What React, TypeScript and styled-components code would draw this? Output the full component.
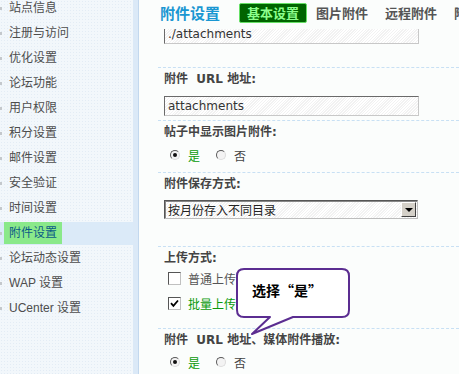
import React from 'react';
import styled, { createGlobalStyle } from 'styled-components';

const GlobalStyle = createGlobalStyle`
  html, body { margin: 0; padding: 0; overflow: hidden; background: #fbfdfc; }
  body { font-family: "Noto Sans CJK SC", sans-serif; font-size: 12px; }
`;

const Page = styled.div`
  display: flex;
  width: 459px;
  height: 374px;
  overflow: hidden;
`;

const Sidebar = styled.nav`
  width: 139px;
  flex: none;
  box-sizing: border-box;
  padding-right: 6px;
  background:
    linear-gradient(to right, transparent 133px, #dbe9f7 133px, #dbe9f7 138px, #c3d8ee 138px),
    radial-gradient(circle, #e3ecf5 0.7px, transparent 1px) 0 0 / 3px 3px,
    #f2f7fb;
`;

const NavList = styled.ul`
  list-style: none;
  margin: -4px 0 0;
  padding: 0;
`;

const NavItem = styled.li<{ $active?: boolean }>`
  position: relative;
  height: 25px;
  line-height: 25px;
  padding-left: 9px;
  font-family: "Liberation Sans", "Noto Sans CJK SC", sans-serif;
  font-size: 12px;
  color: ${p => (p.$active ? '#0a5c86' : '#4d4d4d')};
  white-space: nowrap;
  background: ${p =>
    p.$active
      ? 'linear-gradient(transparent 1px, #dbeaf8 1px, #dbeaf8 24px, transparent 24px)'
      : 'transparent'};
  &::before {
    content: '';
    position: absolute;
    left: 0;
    top: 11px;
    width: 2px;
    height: 3px;
    background: #c4c8cc;
  }
`;

const ActivePill = styled.span`
  display: inline-block;
  margin-left: -5px;
  padding: 0 5px;
  height: 22px;
  line-height: 22px;
  margin-top: 1px;
  vertical-align: top;
  background: #8ae98a;
`;

const Main = styled.main`
  position: relative;
  flex: 1;
  display: flex;
  flex-direction: column;
  min-width: 0;
  background: #fbfdfc;
`;

const Header = styled.header`
  position: relative;
  z-index: 1;
  height: 29px;
  flex: none;
  box-sizing: border-box;
  padding: 3px 0 0 21px;
  display: flex;
  align-items: flex-start;
  background: #fbfdfc;
  white-space: nowrap;
  overflow: hidden;
`;

const Title = styled.h1`
  margin: 0 19px 0 0;
  font-size: 15px;
  line-height: 20px;
  font-weight: bold;
  color: #1a97d2;
`;

const Tabs = styled.div`
  display: flex;
  gap: 1px;
`;

const Tab = styled.span<{ $active?: boolean }>`
  height: 20px;
  box-sizing: border-box;
  line-height: 18px;
  padding: 0 7px;
  font-size: 13px;
  font-weight: bold;
  border: 1px solid ${p => (p.$active ? '#66e066' : 'transparent')};
  border-radius: 2px;
  background: ${p => (p.$active ? '#006400' : 'transparent')};
  color: ${p => (p.$active ? '#8cff8c' : '#555')};
`;

const Content = styled.div`
  flex: 1;
  overflow: hidden;
  padding-left: 19px;
`;

const Section = styled.section<{ $first?: boolean; $pb: number }>`
  margin-top: ${p => (p.$first ? '-5px' : '0')};
  border-top: ${p => (p.$first ? 'none' : '1px dashed #c8e0f4')};
  padding: 0 0 ${p => p.$pb}px 6px;
`;

const Label = styled.div`
  height: 22px;
  line-height: 22px;
  font-family: "DejaVu Sans", "Noto Sans CJK SC", sans-serif;
  font-size: 12px;
  font-weight: bold;
  color: #444;
  white-space: nowrap;
`;

const TextInput = styled.input<{ $mt?: number }>`
  display: block;
  margin: ${p => p.$mt ?? 0}px 0 0;
  width: 255px;
  height: 20px;
  box-sizing: border-box;
  padding: 0 3px;
  font-family: "DejaVu Sans", sans-serif;
  font-size: 12px;
  color: #333;
  border: 1px solid;
  border-color: #6a6a6a #c8c8c8 #c8c8c8 #6a6a6a;
  background: repeating-linear-gradient(135deg, #ffffff 0 1px, #f2f2f2 1px 2px);
  outline: none;
`;

const RadioRow = styled.div<{ $mt?: number }>`
  display: flex;
  align-items: center;
  gap: 16px;
  height: 22px;
  margin-top: ${p => p.$mt ?? 0}px;
  padding-left: 6px;
`;

const Option = styled.label<{ $on?: boolean }>`
  display: flex;
  align-items: center;
  gap: 8px;
  font-size: 12px;
  color: ${p => (p.$on ? '#0a9a0a' : '#444')};
`;

const RadioDot = styled.span<{ $checked?: boolean }>`
  position: relative;
  width: 10px;
  height: 10px;
  box-sizing: border-box;
  border-radius: 50%;
  border: 1px solid;
  border-color: #5a5a5a #dcdcdc #dcdcdc #5a5a5a;
  background: #f3f3f3;
  &::after {
    content: '';
    display: ${p => (p.$checked ? 'block' : 'none')};
    position: absolute;
    left: 2px;
    top: 2px;
    width: 4px;
    height: 4px;
    border-radius: 50%;
    background: #111;
  }
`;

const SelectBox = styled.div`
  margin-top: 5px;
  width: 254px;
  height: 19px;
  box-sizing: border-box;
  display: flex;
  align-items: center;
  border: 1px solid;
  border-color: #555 #bdbdbd #bdbdbd #555;
  box-shadow: inset 1px 1px 0 #888;
  background: repeating-linear-gradient(135deg, #ffffff 0 1px, #f2f2f2 1px 2px);
`;

const SelectText = styled.span`
  flex: 1;
  padding-left: 3px;
  font-size: 12px;
  line-height: 17px;
  color: #222;
`;

const SelectButton = styled.span`
  width: 15px;
  height: 15px;
  margin-right: 1px;
  box-sizing: border-box;
  display: flex;
  align-items: center;
  justify-content: center;
  background: #d4d0c8;
  border: 1px solid;
  border-color: #ffffff #404040 #404040 #ffffff;
  &::after {
    content: '';
    border-left: 4px solid transparent;
    border-right: 4px solid transparent;
    border-top: 4px solid #000;
  }
`;

const CheckRow = styled.label<{ $on?: boolean; $mt?: number }>`
  display: flex;
  align-items: center;
  gap: 7px;
  height: 25px;
  margin-top: ${p => p.$mt ?? 0}px;
  padding-left: 4px;
  font-size: 12px;
  color: ${p => (p.$on ? '#0a9a0a' : '#555')};
`;

const CheckBox = styled.span`
  width: 13px;
  height: 13px;
  box-sizing: border-box;
  display: flex;
  align-items: center;
  justify-content: center;
  border: 1px solid;
  border-color: #555 #c0c0c0 #c0c0c0 #555;
  background: #fff;
`;

const Bubble = styled.div`
  position: absolute;
  left: 96px;
  top: 267px;
  width: 117px;
  height: 70px;
  z-index: 2;
`;

const BubbleText = styled.span`
  position: absolute;
  left: 17px;
  top: 13px;
  line-height: 20px;
  font-size: 14px;
  font-weight: bold;
  color: #000;
  white-space: nowrap;
`;

const navItems = [
  '站点信息',
  '注册与访问',
  '优化设置',
  '论坛功能',
  '用户权限',
  '积分设置',
  '邮件设置',
  '安全验证',
  '时间设置',
  '附件设置',
  '论坛动态设置',
  'WAP 设置',
  'UCenter 设置',
];

const Check = () => (
  <svg width="9" height="9" viewBox="0 0 9 9">
    <path d="M1 4.2 L3.4 6.8 L8 1.5" fill="none" stroke="#000" strokeWidth="1.8" />
  </svg>
);

const YesNo = ({ mt }: { mt?: number }) => (
  <RadioRow $mt={mt}>
    <Option $on>
      <RadioDot $checked />是
    </Option>
    <Option>
      <RadioDot />否
    </Option>
  </RadioRow>
);

export default function App() {
  return (
    <>
      <GlobalStyle />
      <Page>
        <Sidebar>
          <NavList>
            {navItems.map(item =>
              item === '附件设置' ? (
                <NavItem key={item} $active>
                  <ActivePill>{item}</ActivePill>
                </NavItem>
              ) : (
                <NavItem key={item}>{item}</NavItem>
              )
            )}
          </NavList>
        </Sidebar>
        <Main>
          <Header>
            <Title>附件设置</Title>
            <Tabs>
              <Tab $active>基本设置</Tab>
              <Tab>图片附件</Tab>
              <Tab>远程附件</Tab>
              <Tab>附件类型</Tab>
            </Tabs>
          </Header>
          <Content>
            <Section $first $pb={23}>
              <TextInput readOnly value="./attachments" />
            </Section>
            <Section $pb={4}>
              <Label>附件&nbsp; URL 地址:</Label>
              <TextInput $mt={6} readOnly value="attachments" />
            </Section>
            <Section $pb={6}>
              <Label>帖子中显示图片附件:</Label>
              <YesNo mt={1} />
            </Section>
            <Section $pb={27}>
              <Label>附件保存方式:</Label>
              <SelectBox>
                <SelectText>按月份存入不同目录</SelectText>
                <SelectButton />
              </SelectBox>
            </Section>
            <Section $pb={12}>
              <Label>上传方式:</Label>
              <CheckRow $mt={-3}>
                <CheckBox />普通上传
              </CheckRow>
              <CheckRow $on>
                <CheckBox>
                  <Check />
                </CheckBox>
                批量上传
              </CheckRow>
            </Section>
            <Section $pb={0}>
              <Label>附件&nbsp; URL 地址、媒体附件播放:</Label>
              <YesNo />
            </Section>
          </Content>
          <Bubble>
            <svg width="117" height="70" viewBox="0 0 117 70">
              <path
                d="M9 2 H107 Q114 2 114 9 V43 Q114 50 107 50 H58 L17 67 L35 50 H9 Q2 50 2 43 V9 Q2 2 9 2 Z"
                fill="#ffffff"
                stroke="#5b2d91"
                strokeWidth="2"
                strokeLinejoin="round"
              />
            </svg>
            <BubbleText>选择“是”</BubbleText>
          </Bubble>
        </Main>
      </Page>
    </>
  );
}
